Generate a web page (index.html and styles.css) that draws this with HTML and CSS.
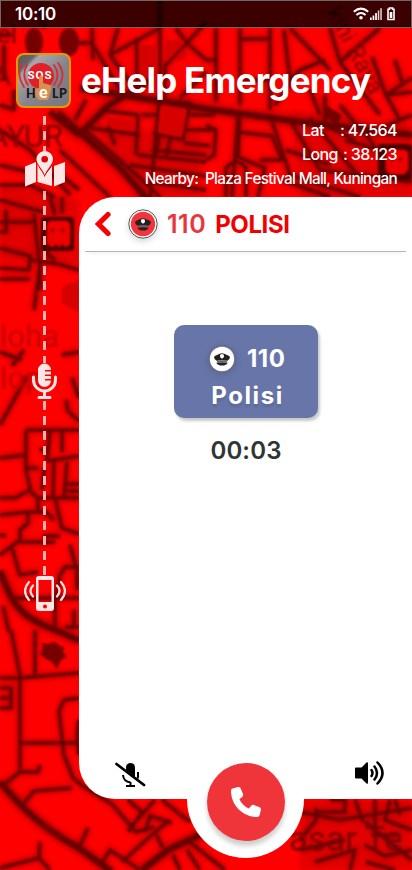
FILE: index.html
```html
<!DOCTYPE html>
<html lang="en">
<head>
<meta charset="utf-8">
<meta name="viewport" content="width=device-width, initial-scale=1">
<title>eHelp Emergency</title>
<link rel="stylesheet" href="styles.css">
</head>
<body>
<div class="screen">
  <svg class="map" viewBox="0 0 412 870" aria-hidden="true">
    <defs>
      <filter id="soft" x="-5%" y="-5%" width="110%" height="110%"><feGaussianBlur stdDeviation="0.8"/></filter>
      <filter id="glow" x="-5%" y="-5%" width="110%" height="110%"><feGaussianBlur stdDeviation="2.6"/></filter>
      <g id="roads">
        <path d="M40 5L44 28M92 28L93 60M78 43H93M93 45L120 90M118 28L110 55M110 55L160 28M110 55L137 92M137 38V92M160 0V90L150 200M176 28L187 43L165 66V98M187 43L206 22M187 43L206 60M206 72L180 98M216 28V102M240 28V105M270 28V110M240 39H270M240 80H270M206 60H216M284 30L290 80L300 70L325 60M290 28L330 70M330 28L340 62L380 115M340 62L380 28M372 57L386 95L412 78M386 95L400 120M395 60L402 82M386 95L412 92M310 90L320 115M300 70L275 105"/>
        <path d="M86 100L75 120M100 110L138 115L136 155M90 128L140 135M108 126L115 145M157 100L190 103L183 140L153 133M142 115H157M138 155L206 162M152 150L206 155M160 133L156 155M171 136L166 158M85 130L140 178L160 197M60 150L110 197M130 165L206 176M150 182L206 190M190 115H215M186 130H214M184 143L210 146"/>
        <path d="M206 125L216 130L214 155L206 160M230 112L238 115L232 197M238 132L272 136L282 160L260 160M240 118L238 157L265 168L258 197M226 197V168Q237 156 246 168V197M270 115L290 175L360 197M290 120L320 170L412 182M310 118L360 178M325 95V125L355 140M340 105L365 135L412 115M345 140L412 160M360 125L380 155M286 150L330 165M282 180L330 197"/>
        <path d="M0 130L30 150L70 195M0 165L28 172M0 185H30L55 197M14 90V110M0 105L15 110M0 35H12M4 45V80M55 170L79 190M0 200L43 212M0 222H34M34 214L36 230M6 210V232H0M50 197L55 215M62 197V213M0 248L30 256L29 270L0 268M35 225L40 265L34 310M0 279H30M30 260L58 264L79 270M43 250L55 260M40 264V290M0 352L22 360M24 350L12 366M62 355L79 352M27 376L0 425M72 378L79 398"/>
        <path d="M26 430H79M26 430V470L31 492L38 498M0 458L26 455M27 468H38M40 450H46M50 431L47 462M62 431V452M54 462L53 498M44 468L42 490M67 462L64 498M48 461L79 456M67 484H79M67 491H79M66 400L68 411L79 421M38 498H79M0 498H15L30 490M38 498V512M55 498L62 528L79 534M0 515L28 512H46L54 520M28 512V523L20 530V540L0 555M20 542H55M43 536H60M70 545L77 570V590M12 548L20 575L38 572M15 598H79M60 575L65 567H79M60 575L55 600V628M65 627H79M74 610V627M3 606L9 632M0 535L6 536"/>
        <path d="M11 630L20 675V772M35 630V675M0 678H20L79 673M0 688H11V708H0M0 698H11M20 743H79M79 698L64 700L59 711L64 755L73 778L84 787L112 804L136 832L154 827M20 772H38L40 765M20 772L6 783M24 803L34 791L72 788M88 828L78 850M40 842L39 858L50 870M0 868L39 858M100 866L110 850L140 870M128 800L142 812L129 832M122 862L155 832L170 820M155 800L128 830M145 832L150 816L172 823M162 800L190 822M156 834L163 848M173 855L180 870M79 720L77 735L79 755"/>
        <path d="M187 840L225 870M187 850L200 870M330 800H345V812H315M300 812L340 820L412 808M316 808V820L300 840M355 800L363 822M375 800V835M390 800L385 820L412 830M395 800L400 815M300 850L345 840M315 862L355 850L350 870M365 822L412 860M372 835H400M366 862L395 870M365 845L385 856L412 850"/>
      </g>
      <g id="mainroads">
        <path d="M50 112L78 134L86 128L108 106L150 80M58 113L120 168L148 200M80 88L206 109L300 122L412 135M0 571C8 592 14 608 32 619S60 630 79 641M0 782C22 808 42 828 79 848L112 872M142 870L168 850L206 832"/>
      </g>
    </defs>
    <rect width="412" height="870" class="land"/>
    <g filter="url(#glow)">
      <path class="shade" d="M95 125L200 135V197H140ZM290 110L412 125V197H300ZM0 185L79 200V262H0ZM300 800H412V870H300Z"/>
      <use href="#roads" class="road-halo"/>
      <use href="#mainroads" class="main-halo"/>
    </g>
    <g filter="url(#soft)">
      <path class="plot" d="M163 103H186V135H159ZM106 117L135 120V130L108 126ZM165 40H186V60H165ZM139 45H157V80H139ZM62 286L79 280V312L62 304Z"/>
      <use href="#roads" class="road"/>
      <use href="#mainroads" class="main-road"/>
      <ellipse class="block" cx="34" cy="42" rx="9" ry="14"/>
      <ellipse class="block" cx="69" cy="42" rx="10" ry="14"/>
      <path class="block" d="M42 643l5 1 8-2 5 4 4 1-1 5 4 5-6 3-4 9-5-7-6-3-6-5 3-6zM36 818l12 8 12 6 4 8-20-10zM326 105l16 10-4 10-14-8z"/>
      <rect class="stop" x="41" y="217" width="33" height="34" rx="4"/>
      <path class="stop-face" d="M47 226q0-5 5-5h13q5 0 5 5v18l-4 3-4-3-3 3-3-3-3 3-6-3z"/>
      <path class="stop-eye" d="M51 229h3v3h-3zM61 229h3v3h-3z"/>
      <rect class="stop" x="378" y="144" width="34" height="36" rx="3"/>
      <path class="stop-face" d="M386 155q0-5 5-5h12q5 0 5 5v15l-4 4h-14l-4-4z"/>
      <path class="stop-eye" d="M391 158h3v3h-3zM399 158h3v3h-3z"/>
      <g class="label">
        <text x="-12" y="147" font-size="31">AYUR</text>
        <text x="-7" y="86" font-size="28">A</text>
        <text x="-3" y="43" font-size="26">el</text>
        <text x="0" y="347" font-size="31" class="faint">loha</text>
        <text x="0" y="389" font-size="31" class="faint">lop</text>
        <text x="289" y="851" font-size="35">asar Te</text>
        <text transform="translate(326 12) rotate(62)" font-size="24">kini Raya</text>
      </g>
    </g>
  </svg>

  <header class="status">
    <span class="clock">10:10</span>
    <svg class="status-icons" width="44" height="14" viewBox="0 0 44 14">
      <g fill="none" stroke="#fff" stroke-width="2"><path d="M.8 4.8Q8 -1.6 15.200 4.800M3.400 8Q8 4 12.600 8"/></g>
      <circle cx="8" cy="10.700" r="1.800" fill="#fff"/>
      <path d="M17 10.500h1.700V13H17zM19.600 8.500h1.700V13h-1.700zM22.200 6h1.700v7h-1.700z" fill="#fff"/>
      <path d="M24.800 3.600h1.500V13h-1.500zM27.300 1.200h1.500V13h-1.500z" fill="#fff" opacity=".85"/>
      <path d="M35 2.300h1.400V1h3.200v1.300H41v10.200h-6z" fill="none" stroke="#fff" stroke-width="1.600"/><path d="M36.700 5h2.600v6h-2.600z" fill="#fff"/>
    </svg>
  </header>

  <div class="brand">
    <svg class="logo" width="55" height="55" viewBox="0 0 55 55">
      <defs><linearGradient id="steel" x1="0" y1="0" x2="1" y2="1"><stop offset="0" stop-color="#555"/><stop offset=".18" stop-color="#666"/><stop offset=".23" stop-color="#aaa5ac"/><stop offset=".55" stop-color="#85838c"/><stop offset="1" stop-color="#77747b"/></linearGradient></defs>
      <rect x="1" y="1" width="53" height="53" rx="7" fill="url(#steel)" stroke="#e39a00" stroke-width="2"/>
      <circle cx="25" cy="23" r="13" fill="#e01f26"/>
      <g fill="none" stroke="#d92a32" stroke-width="1.700" stroke-linecap="round"><path d="M6 10Q0 22 8 34M11 12Q5 22 12 32M38 12Q45 22 38 32M42 10Q51 22 42 34"/></g>
      <text x="11.500" y="26" class="logo-sos">SOS</text>
      <path d="M23 24q2-3 4 0v6l7 2q2 1 1 5l-3 10h-9q-5-5-4-11l4-1z" fill="#d8914d"/>
      <text x="10" y="45" class="logo-help">H</text><text x="36" y="45" class="logo-help">LP</text>
      <text x="23" y="45" class="logo-e">e</text>
    </svg>
    <h1>eHelp Emergency</h1>
  </div>

  <div class="location">
    <div class="coord"><span>Lat</span><span>: 47.564</span></div>
    <div class="coord"><span>Long</span><span>: 38.123</span></div>
    <div class="nearby">Nearby:&nbsp; Plaza Festival Mall, Kuningan</div>
  </div>

  <main class="body">
    <aside class="rail">
      <div class="dash dash-top"></div>
      <svg width="40" height="36" viewBox="0 0 40 36"><path d="M0 15.500L11 11V31L0 35.500zM29 15L40 11V31L29 35.500zM12.500 12L14 16.500L19.500 24.500L26 16.500L27 15V35L12.500 31z"/><path fill-rule="evenodd" class="pin" d="M19.700 0C24.700 0 28 3.700 28 8.200C28 13 22 18 19.700 24C17.500 18 11.500 13 11.500 8.200C11.500 3.700 15 0 19.700 0zM19.700 5a3.300 3.300 0 1 0 0 6.600a3.300 3.300 0 0 0 0-6.600z"/></svg>
      <div class="dash dash-mid"></div>
      <svg width="25" height="36" viewBox="0 0 25 36"><path d="M6 7a6.500 6.500 0 0 1 13 0h-6v1.500h6v3h-6V13h6v3h-6v1.500h6a6.500 6.500 0 0 1-13 0z"/><path d="M1.500 14v3a11 11 0 0 0 22 0v-3M12.500 28v5M7 34.500h11" class="rail-line"/></svg>
      <div class="dash dash-low"></div>
      <svg width="42" height="36" viewBox="0 0 42 36"><path fill-rule="evenodd" d="M15 0h12q3 0 3 3v29q0 3-3 3H15q-3 0-3-3V3q0-3 3-3zM14.500 4v22h13V4zM21 28.500a2 2 0 1 0 0 4a2 2 0 0 0 0-4z"/><g class="rail-line rail-wave"><path d="M5 6Q-3 15 5 24M9 9.500Q4 15 9 20.500M33 9.500Q38 15 33 20.500M37 6Q45 15 37 24"/></g></svg>
    </aside>

    <section class="card">
      <div class="card-head">
        <svg class="back" width="16" height="24" viewBox="0 0 16 24"><path d="M13 2.500L3.500 12L13 21.500" fill="none" stroke="#f90000" stroke-width="5.200" stroke-linecap="round"/></svg>
        <svg class="badge" width="32" height="32" viewBox="0 0 32 32">
          <defs><g id="cap"><path d="M8 14.500Q8 12.800 11 12Q14 10.300 16 10.300T21 12Q24 12.800 24 14.500Q23.500 16.500 21.500 17.800Q16 16.800 10.500 17.800Q8.500 16.500 8 14.500z" fill="#222"/><path d="M16 11l1.900.8v2.500L16 15.800l-1.900-1.500v-2.500z" fill="#fff"/><path d="M11 17.800Q16 16.800 21 17.800V19.500Q16 18.500 11 19.500z" fill="#666"/><path d="M10.300 19.700Q16 18.600 21.700 19.700Q20.500 22.500 16 22.500T10.300 19.700z" fill="#222"/></g></defs>
          <circle cx="16" cy="16" r="14.200" fill="#fff" stroke="#444" stroke-width=".9"/><circle cx="16" cy="16" r="12.200" fill="#f2353b"/><use href="#cap"/>
        </svg>
        <span class="num">110</span><span class="name">POLISI</span>
      </div>
      <div class="call">
        <div class="tile">
          <div class="tile-row">
            <svg width="32" height="32" viewBox="0 0 32 32"><circle cx="16" cy="16" r="14" fill="none" stroke="#666d83" stroke-width="1.200"/><circle cx="16" cy="16" r="12.200" fill="#fff"/><use href="#cap"/></svg>
            <span>110</span>
          </div>
          <div class="tile-name">Polisi</div>
        </div>
        <div class="timer">00:03</div>
      </div>
      <footer class="controls">
        <svg class="mute" width="31" height="26" viewBox="0 0 31 26"><path d="M11 8V5.500a4.500 4.500 0 0 1 9 0V15z"/><path d="M8 13q.5 6.500 7.500 7.500M15.500 20v4M11 24h9M23 10v4q0 1.500-.6 2.600" class="ink"/><path d="M1.500 2L29 23" class="slash"/></svg>
        <div class="hang-ring"><div class="hang"><svg width="30" height="30" viewBox="0 0 512 512"><path fill="#fff" d="M164.900 24.600c-7.700-18.600-28-28.500-47.400-23.200l-88 24C12.100 30.200 0 46 0 64c0 247.400 200.600 448 448 448 18 0 33.800-12.100 38.600-29.500l24-88c5.300-19.400-4.600-39.700-23.200-47.400l-96-40c-16.300-6.800-35.200-2.100-46.300 11.600L304.700 368C234.300 334.700 177.300 277.700 144 207.300l49.300-40.300c13.700-11.200 18.400-30 11.600-46.300z"/></svg></div></div>
        <svg class="speaker" width="30" height="26" viewBox="0 0 30 26"><path d="M0 8.500q0-1 1-1h5.500L11.500 2.500Q13 1.500 13 3.500v19Q13 24.500 11.500 23.500L6.500 18.500H1q-1 0-1-1z"/><path d="M16.500 10Q18.500 13 16.500 16M19.500 6.500Q24.500 13 19.500 19.500M22.500 2.500Q32.500 13 22.500 23.500" class="ink wave"/></svg>
      </footer>
    </section>
  </main>
</div>
</body>
</html>
```
FILE: styles.css
```css
* { box-sizing: border-box; }
body { margin: 0; font-family: Inter, "Liberation Sans", sans-serif; color: #fff; }
.screen { position: relative; width: 412px; height: 870px; overflow: hidden; display: flex; flex-direction: column; background: #f00; }
.map { position: absolute; left: 0; top: 0; width: 412px; height: 870px; }
.screen > :not(.map) { position: relative; }

.land { fill: #ff0000; }
.shade { fill: #b80000; opacity: .4; }
.plot { fill: #d60000; }
.road-halo, .main-halo { fill: none; stroke: #980000; stroke-width: 7; opacity: .62; }
.main-halo { stroke-width: 12; }
.road, .main-road { fill: none; stroke: #680000; stroke-width: 3; stroke-linejoin: round; }
.main-road { stroke-width: 6; }
.block { fill: #760000; }
.stop { fill: #4c0000; }
.stop-face { fill: #ed0000; }
.stop-eye { fill: #600000; }
.label { fill: #7c0000; font-family: Roboto, sans-serif; }
.faint { fill: #c40000; }

.status { height: 28px; flex: none; display: flex; align-items: center; justify-content: space-between; padding: 0 14px 0 14px; border: 1px solid #6f6868; background: rgba(0, 0, 0, .76); }
.clock { font-size: 17px; font-weight: 600; letter-spacing: -.25px; line-height: 26px; }

.brand { display: flex; align-items: center; height: 55px; margin: 25px 0 0 16px; gap: 10px; flex: none; }
.logo { flex: none; }
.logo-sos { font: 700 11.5px Roboto, sans-serif; fill: #fff; letter-spacing: 1px; }
.logo-help { font: 900 12.5px Lato, sans-serif; fill: #161616; letter-spacing: .5px; }
.logo-e { font: 900 16px Lato, sans-serif; fill: #fff; }
h1 { margin: -2px 0 0; font-size: 35px; line-height: 40px; font-weight: 700; letter-spacing: -.78px; white-space: nowrap; }

.location { flex: none; height: 89px; padding: 10px 15px 0 0; display: flex; flex-direction: column; align-items: flex-end; font-size: 16px; line-height: 24px; font-weight: 500; letter-spacing: -.6px; white-space: nowrap; }
.coord { display: flex; width: 95px; justify-content: space-between; }
.nearby { letter-spacing: -.67px; font-size: 15.3px; line-height: 25px; }

.body { display: flex; height: 673px; flex: none; }
.rail { width: 79px; padding-left: 10px; margin-top: -81px; display: flex; flex-direction: column; align-items: center; fill: #ffe6e6; }
.rail svg { flex: none; }
.pin { stroke: #d00000; stroke-width: 1.5; paint-order: stroke; }
.rail-line { fill: none; stroke: #ffe6e6; stroke-width: 3; stroke-linecap: round; }
.rail-wave { stroke-width: 2.2; }
.dash { width: 3px; flex: none; background: repeating-linear-gradient(to bottom, #ecb3b3 0 9px, transparent 9px 15px); }
.dash-top { height: 35px; }
.dash-mid { height: 176px; background-position: 0 4px; background-repeat: no-repeat; }
.dash-low { height: 177px; background-position: 0 2px; background-repeat: no-repeat; }

.card { width: 333px; height: 602px; background: #fff; border-radius: 36px 0 0 36px; display: flex; flex-direction: column; }
.card-head { height: 55px; margin: 0 6px; padding: 0 0 1px 10px; display: flex; align-items: center; border-bottom: 1px solid #b5b5b5; box-shadow: 0 4px 4px -3px #eee; font-size: 25px; line-height: 30px; font-weight: 600; }
.badge { margin-left: 16px; filter: drop-shadow(0 3px 3px rgba(0, 0, 0, .15)); }
.num { margin-left: 8px; padding-top: 1px; color: #e9363d; letter-spacing: .5px; }
.name { margin-left: 9px; padding-top: 2px; color: #f20000; font-size: 24px; font-weight: 700; letter-spacing: -.4px; }

.call { flex: 1; display: flex; flex-direction: column; align-items: center; padding: 73px 0 0 1px; }
.tile { width: 144px; height: 93px; border-radius: 10px; background: #6875a9; box-shadow: 2px 3px 3px rgba(0, 0, 0, .22); padding-top: 18px; font-size: 24px; font-weight: 700; }
.tile-row { height: 32px; display: flex; align-items: center; gap: 9px; padding-left: 32px; }
.tile-row span { margin-top: -2px; letter-spacing: .5px; }
.tile-row svg { filter: drop-shadow(0 2px 3px rgba(0, 0, 0, .15)); }
.tile-name { line-height: 30px; margin-top: 6px; padding-left: 3px; text-align: center; letter-spacing: 1.6px; text-shadow: 0 3px 3px rgba(0, 0, 0, .12); }
.timer { margin-top: 18px; color: #303434; font-size: 24px; line-height: 30px; font-weight: 600; letter-spacing: .15px; }

.controls { height: 59px; flex: none; display: flex; padding-left: 36px; }
.mute { margin-top: 22px; flex: none; }
.speaker { margin: 20px 0 0 51px; flex: none; }
.ink { fill: none; stroke: #000; stroke-width: 2; }
.wave { stroke-width: 2.5; stroke-linecap: round; }
.slash { stroke: #000; stroke-width: 2.8; stroke-linecap: round; }
.hang-ring { width: 117px; height: 118px; margin-left: 41px; flex: none; border-radius: 50%; background: #fff; padding: 23px 0 0 20px; }
.hang { width: 78px; height: 78px; border-radius: 50%; background: #f0353a; display: flex; align-items: center; justify-content: center; box-shadow: 0 5px 5px rgba(0, 0, 0, .2); }
```
